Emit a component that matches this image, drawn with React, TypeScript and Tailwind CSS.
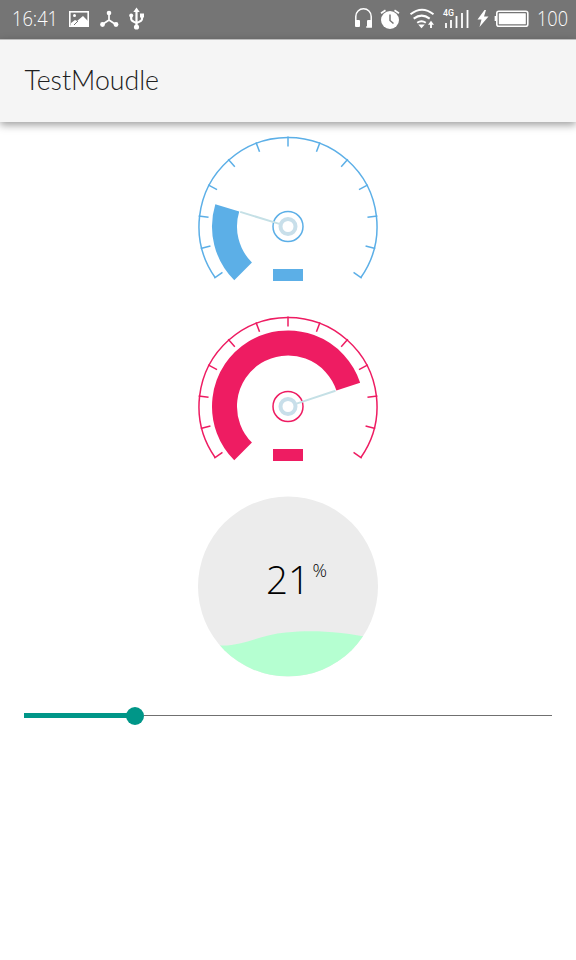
type GaugeProps = { color: string; end: number };

const polar = (r: number, deg: number): [number, number] => {
  const a = (deg * Math.PI) / 180;
  return [90 + r * Math.cos(a), 90 + r * Math.sin(a)];
};

const pt = (r: number, deg: number) => polar(r, deg).map((n) => n.toFixed(2)).join(' ');

function Gauge({ color, end }: GaugeProps) {
  const large = end - 135 > 180 ? 1 : 0;
  const [nx, ny] = polar(50, end);
  const [mx, my] = polar(9, end);
  return (
    <svg className="block h-[180px] w-[180px] shrink-0 overflow-visible" viewBox="0 -0.5 180 180" fill="none">
      <path d={`M${pt(89, 145)} A89 89 0 1 1 ${pt(89, 35)}`} stroke={color} strokeWidth="1.5" />
      {Array.from({ length: 13 }, (_, i) => {
        const a = 145 + (i * 250) / 12;
        return <path key={i} d={`M${pt(90, a)} L${pt(80, a)}`} stroke={color} strokeWidth="1.5" />;
      })}
      <path d={`M${pt(63.5, 135)} A63.5 63.5 0 ${large} 1 ${pt(63.5, end)}`} stroke={color} strokeWidth="25" />
      <circle cx="90" cy="90" r="15" stroke={color} strokeWidth="1.5" />
      <line x1={mx} y1={my} x2={nx} y2={ny} stroke="#c5e0e6" strokeWidth="2" />
      <circle cx="90" cy="90" r="7.5" stroke="#c8dfea" strokeWidth="4" />
      <rect x="75" y="132.5" width="30" height="12" fill={color} />
    </svg>
  );
}

function StatusBar() {
  return (
    <header className="flex h-[39px] shrink-0 items-center bg-[#757575] text-white">
      <svg className="block h-[39px] w-[576px]" viewBox="0 0 576 39" fill="none" stroke="white">
        <g fill="white" stroke="none" className="font-['Open_Sans'] font-light">
          <text x="12" y="26" fontSize="20.5" textLength="46" lengthAdjust="spacingAndGlyphs">16:41</text>
          <text x="537" y="26" fontSize="20.5" textLength="31" lengthAdjust="spacingAndGlyphs">100</text>
        </g>
        <rect x="69.8" y="11.8" width="18.4" height="14.4" strokeWidth="1.6" />
        <circle cx="74.5" cy="15.5" r="1.5" fill="white" stroke="none" />
        <path d="M71 26v-3l4-3 2 1 6-5 5 5v5z" fill="white" stroke="none" />
        <path d="M74 25l4-4" stroke="#757575" strokeWidth="1" />
        <path d="M109 13v8M109 20l-6 4M109 20l6 4" strokeWidth="1.7" />
        <g fill="white" stroke="none">
          <circle cx="109" cy="13" r="2.3" />
          <circle cx="102.5" cy="24.5" r="2.4" />
          <circle cx="116" cy="24.5" r="2.4" />
          <path d="M136.5 7.5l3.2 4.5h-6.4z" />
          <circle cx="136.5" cy="27" r="2.6" />
          <circle cx="131.2" cy="15.5" r="2" />
          <rect x="140" y="13.5" width="4" height="4" />
        </g>
        <path d="M136.5 11v16M131.2 16v3q0 2 5.3 4M142 16v3q0 2-5.5 4" strokeWidth="2.2" />
        <path d="M355.8 22v-5.5a7.7 7.7 0 0 1 15.4 0V27h-5" strokeWidth="1.5" />
        <rect x="355" y="20" width="5" height="7" rx="1" fill="white" stroke="none" />
        <rect x="367" y="20" width="5" height="7" rx="1" fill="white" stroke="none" />
        <circle cx="390" cy="20" r="9" fill="white" stroke="none" />
        <path d="M381 13.2l4.5-3M399 13.2l-4.5-3" strokeWidth="1.7" />
        <path d="M390 14.5v6l3.5 3" stroke="#757575" strokeWidth="1.5" />
        <path d="M410.5 14.2q11.5-9 23 0M413.7 18.6q8-6 16 0M417.2 22.7q4.3-3 8.6 0" strokeWidth="2" />
        <path d="M418.2 24.6h6.6L421.5 28.3z" fill="white" stroke="none" />
        <path d="M431 28v-4" strokeWidth="1.9" />
        <path d="M431 20.8l3 4h-6z" fill="white" stroke="none" />
        <text x="443" y="16" fontSize="9" textLength="11" lengthAdjust="spacingAndGlyphs" fill="white" stroke="none" className="font-['Roboto'] font-medium">4G</text>
        <path d="M446 23v5M451 20v8M456.5 16v12M462 13v15M467.5 10v18" strokeWidth="1.8" />
        <path d="M484.5 10L477.5 19.5h4L479.5 27l9-10.5h-4.5l2-6.5z" fill="white" stroke="none" />
        <rect x="496.8" y="11.2" width="31" height="15" rx="2" strokeWidth="1.6" />
        <rect x="498.8" y="13.2" width="27" height="11" rx="0.5" fill="white" stroke="none" />
        <path d="M495.5 16v5" strokeWidth="1.7" />
      </svg>
    </header>
  );
}

function WaveProgress() {
  return (
    <svg className="block h-[180px] w-[180px] shrink-0 overflow-visible" viewBox="0 -0.5 180 180">
      <defs>
        <clipPath id="disc"><circle cx="90" cy="90" r="90" /></clipPath>
      </defs>
      <circle cx="90" cy="90" r="90" fill="#ececec" />
      <path clipPath="url(#disc)" d="M0 149H25C46 149 64 138 88 136C116 133 140 135 180 142V180H0Z" fill="#b5ffd1" />
      <g fill="black" className="font-['Open_Sans'] font-light">
        <text x="68" y="97.5" fontSize="39" textLength="44" lengthAdjust="spacingAndGlyphs">21</text>
        <text x="114.5" y="80" fontSize="19" textLength="14.5" lengthAdjust="spacingAndGlyphs">%</text>
      </g>
    </svg>
  );
}

function Slider() {
  return (
    <div className="mx-6 mt-[30px] flex h-[19px] items-center">
      <div className="h-[5px] w-[103px] bg-[#009688]" />
      <div className="-ml-px size-[18px] rounded-full bg-[#009688]" />
      <div className="h-px flex-1 bg-[#707070]" />
    </div>
  );
}

export default function App() {
  return (
    <div className="flex h-[960px] w-[576px] flex-col overflow-hidden bg-white font-['Lato',sans-serif]">
      <StatusBar />
      <div className="relative flex h-[83px] shrink-0 items-center border-t border-[#bdbdbd] bg-[#f5f5f5] pl-6 shadow-[0_3px_8px_rgba(0,0,0,0.38)]">
        <svg className="block h-12 w-[160px] overflow-visible" viewBox="0 0 160 48">
          <text x="0.5" y="33" fontSize="28" textLength="134.5" lengthAdjust="spacingAndGlyphs" fill="#202020" className="font-['Lato'] font-light">TestMoudle</text>
        </svg>
      </div>
      <main className="flex flex-col pt-[14px]">
        <div className="flex flex-col items-center">
          <Gauge color="#5cafe7" end={197} />
          <Gauge color="#ee1c62" end={341.7} />
          <WaveProgress />
        </div>
        <Slider />
      </main>
    </div>
  );
}
